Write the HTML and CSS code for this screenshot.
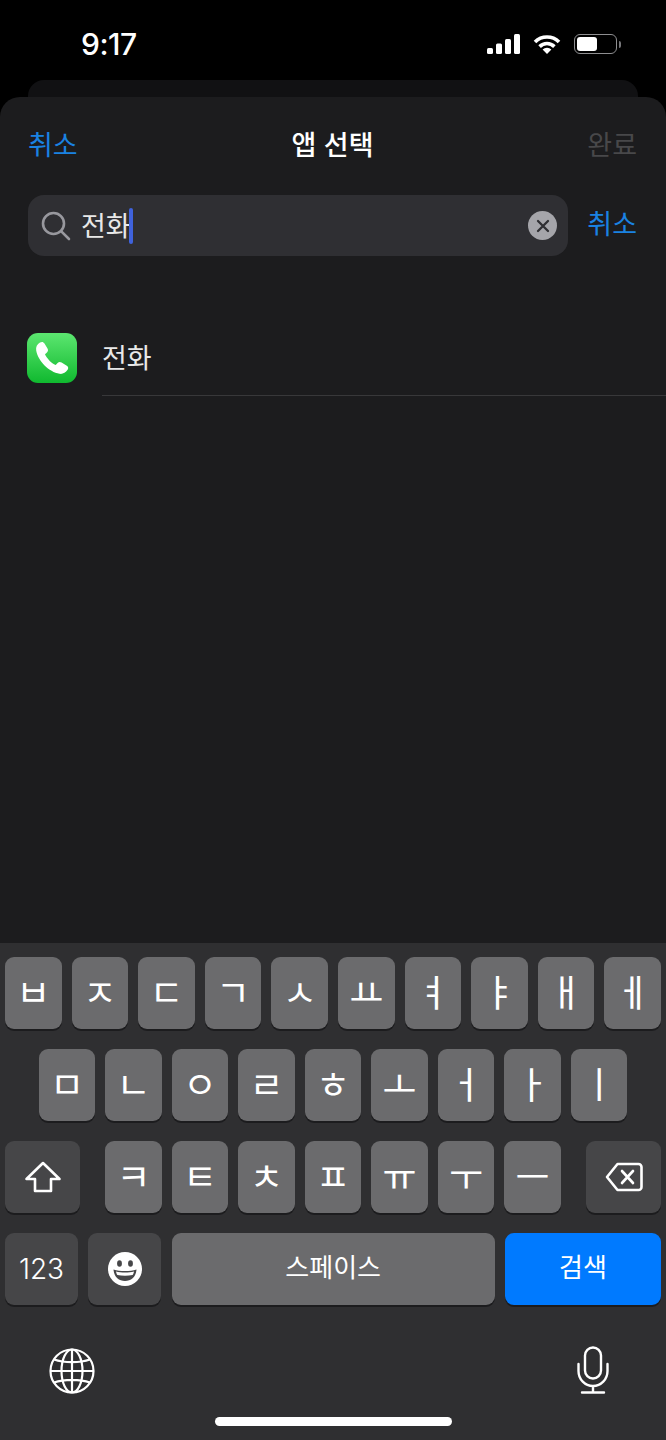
FILE: index.html
```html
<!DOCTYPE html>
<html lang="ko">
<head>
<meta charset="UTF-8">
<meta name="viewport" content="width=device-width, initial-scale=1.0">
<title>앱 선택</title>
<link rel="stylesheet" href="styles.css">
</head>
<body>

<div class="status-bar">
    <span class="clock">9:17</span>
    <div class="status-icons">
        <svg class="signal" width="33" height="20" viewBox="0 0 33 20" fill="#fff">
            <rect x="0" y="14" width="6" height="6" rx="1.5"/>
            <rect x="9" y="9.5" width="6" height="10.5" rx="1.5"/>
            <rect x="18" y="5" width="6" height="15" rx="1.5"/>
            <rect x="27" y="0" width="6" height="20" rx="1.5"/>
        </svg>
        <svg class="wifi" width="28" height="20" viewBox="0 0 28 20">
            <path d="M2 8A17 17 0 0 1 26 8" fill="none" stroke="#fff" stroke-width="3.6"/>
            <path d="M6.6 12.6A10.5 10.5 0 0 1 21.4 12.6" fill="none" stroke="#fff" stroke-width="3.6"/>
            <path d="M14 20L9.6 15.5A6.2 6.2 0 0 1 18.4 15.5Z" fill="#fff"/>
        </svg>
        <div class="battery">
            <div class="battery-level"></div>
        </div>
        <div class="battery-nub"></div>
    </div>
</div>

<div class="back-sheet"></div>

<div class="sheet">
    <div class="nav">
        <span class="link">취소</span>
        <span class="nav-title">앱 선택</span>
        <span class="done">완료</span>
    </div>

    <div class="search-row">
        <div class="search-box">
            <svg class="search-icon" width="30" height="30" viewBox="0 0 30 30" fill="none" stroke="#98989e" stroke-width="2.6" stroke-linecap="round">
                <circle cx="12.5" cy="12.5" r="10.5"/>
                <path d="M20.3 20.3L28 28"/>
            </svg>
            <span class="search-text">전화</span>
            <span class="caret"></span>
            <span class="clear-btn">
                <svg width="14" height="14" viewBox="0 0 14 14" stroke="#2f2f33" stroke-width="2.3" stroke-linecap="round">
                    <path d="M2 2L12 12M12 2L2 12"/>
                </svg>
            </span>
        </div>
        <span class="link search-cancel">취소</span>
    </div>

    <div class="app-row">
        <div class="app-icon">
            <svg width="50" height="50" viewBox="0 0 50 50" fill="#fff">
                <path d="M13 9.5C15 8.5 16.5 9 17.5 10.5L20.5 15.5C21.5 17.2 21 18.5 19.7 19.7L18 21.3C19.5 25 24.5 30.5 28.7 32L30.6 30C31.8 28.8 33 28.5 34.6 29.5L39.8 32.8C41.3 33.8 41.6 35.3 40.6 36.8C38.5 40 35.5 41.3 32.5 40.8C22 39 11 28 9.2 17.5C8.7 14 10 11.3 13 9.5Z"/>
            </svg>
        </div>
        <div class="app-name">전화</div>
    </div>
</div>

<div class="keyboard">
    <div class="key-row spread">
        <div class="key">ㅂ</div>
        <div class="key">ㅈ</div>
        <div class="key">ㄷ</div>
        <div class="key">ㄱ</div>
        <div class="key">ㅅ</div>
        <div class="key">ㅛ</div>
        <div class="key">ㅕ</div>
        <div class="key">ㅑ</div>
        <div class="key">ㅐ</div>
        <div class="key">ㅔ</div>
    </div>
    <div class="key-row">
        <div class="key">ㅁ</div>
        <div class="key">ㄴ</div>
        <div class="key">ㅇ</div>
        <div class="key">ㄹ</div>
        <div class="key">ㅎ</div>
        <div class="key">ㅗ</div>
        <div class="key">ㅓ</div>
        <div class="key">ㅏ</div>
        <div class="key">ㅣ</div>
    </div>
    <div class="key-row spread">
        <div class="key dark shift">
            <svg width="38" height="32" viewBox="0 0 38 32" fill="none" stroke="#fff" stroke-width="2.6" stroke-linejoin="round">
                <path d="M19 2L35.5 18H27V30H11V18H2.5Z"/>
            </svg>
        </div>
        <div class="letters">
            <div class="key">ㅋ</div>
            <div class="key">ㅌ</div>
            <div class="key">ㅊ</div>
            <div class="key">ㅍ</div>
            <div class="key">ㅠ</div>
            <div class="key">ㅜ</div>
            <div class="key">ㅡ</div>
        </div>
        <div class="key dark shift">
            <svg width="38" height="30" viewBox="0 0 38 30" fill="none" stroke="#fff" stroke-width="2.6" stroke-linejoin="round" stroke-linecap="round">
                <path d="M12.5 2H33.5A3 3 0 0 1 36.5 5V25A3 3 0 0 1 33.5 28H12.5L2 15Z"/>
                <path d="M17 9L28 21M28 9L17 21"/>
            </svg>
        </div>
    </div>
    <div class="key-row spread">
        <div class="key dark num">123</div>
        <div class="key dark num">
            <svg width="34" height="34" viewBox="0 0 34 34">
                <circle cx="17" cy="17" r="17" fill="#fff"/>
                <ellipse cx="11.5" cy="11.5" rx="2.4" ry="3.2" fill="#464648"/>
                <ellipse cx="22.5" cy="11.5" rx="2.4" ry="3.2" fill="#464648"/>
                <path d="M5.5 17.5C12 19.5 22 19.5 28.5 17.5C28 25 23 29 17 29C11 29 6 25 5.5 17.5Z" fill="#464648"/>
                <path d="M8 19.5C13 20.8 21 20.8 26 19.5C25.6 21.5 25.2 22.3 24.6 23C20 24 14 24 9.4 23C8.8 22.3 8.4 21.5 8 19.5Z" fill="#fff"/>
            </svg>
        </div>
        <div class="key space">스페이스</div>
        <div class="key search-key">검색</div>
    </div>

    <div class="kb-bottom">
        <svg class="globe" width="46" height="46" viewBox="0 0 46 46" fill="none" stroke="#fff" stroke-width="2.2">
            <circle cx="23" cy="23" r="21.5"/>
            <ellipse cx="23" cy="23" rx="10.5" ry="21.5"/>
            <path d="M23 1.5V44.5M1.5 23H44.5M5 11.5C15 15 31 15 41 11.5M5 34.5C15 31 31 31 41 34.5"/>
        </svg>
        <svg class="mic" width="32" height="48" viewBox="0 0 32 48" fill="none" stroke="#fff" stroke-width="2.4" stroke-linecap="round">
            <rect x="8" y="1.5" width="16" height="31" rx="8"/>
            <path d="M1.5 18V25C1.5 33.5 8 40 16 40C24 40 30.5 33.5 30.5 25V18M16 40V46.5M5 46.5H27"/>
        </svg>
    </div>
    <div class="home-bar"></div>
</div>

</body>
</html>
```

FILE: styles.css
```css
html, body {
    height: 100%;
}

body {
    display: flex;
    flex-direction: column;
    height: 1440px;
    margin: 0;
    overflow: hidden;
    background-color: #000;
    color: #fff;
    font-family: 'Noto Sans CJK KR', 'Noto Sans', sans-serif;
}

.status-bar {
    display: flex;
    justify-content: space-between;
    align-items: center;
    height: 80px;
    padding: 8px 45px 0 81px;
    box-sizing: border-box;
    flex-shrink: 0;
}

.clock {
    font-family: Inter, sans-serif;
    font-size: 30px;
    font-weight: 500;
    letter-spacing: -0.5px;
}

.status-icons {
    display: flex;
    align-items: center;
}

.wifi {
    margin-left: 13px;
}

.battery {
    width: 43px;
    height: 20px;
    margin-left: 13px;
    padding: 2px;
    box-sizing: border-box;
    border: 1.5px solid #8e8e90;
    border-radius: 6px;
}

.battery-level {
    width: 20px;
    height: 100%;
    background-color: #fff;
    border-radius: 3px;
}

.battery-nub {
    width: 2px;
    height: 7px;
    margin-left: 2px;
    background-color: #77777a;
    border-radius: 0 2px 2px 0;
}

.back-sheet {
    height: 17px;
    margin: 0 28px;
    background-color: #111113;
    border-radius: 16px 16px 0 0;
    flex-shrink: 0;
}

.sheet {
    flex: 1;
    background-color: #1c1c1e;
    border-radius: 20px 20px 0 0;
}

.nav {
    display: flex;
    justify-content: space-between;
    align-items: center;
    height: 94px;
    padding: 0 29px 2px 28px;
    box-sizing: border-box;
}

.link {
    color: #1a82e2;
    font-size: 27px;
    line-height: 1;
}

.nav-title {
    font-size: 27px;
    font-weight: 500;
    line-height: 1;
}

.done {
    color: #48484a;
    font-size: 27px;
    line-height: 1;
}

.search-row {
    display: flex;
    align-items: center;
    justify-content: space-between;
    padding: 4px 29px 0 28px;
}

.search-cancel {
    margin-bottom: 6px;
}

.search-box {
    display: flex;
    align-items: center;
    width: 540px;
    height: 61px;
    padding: 0 11px 0 13px;
    box-sizing: border-box;
    background-color: #2f2f33;
    border-radius: 16px;
}

.search-icon {
    flex-shrink: 0;
}

.search-text {
    margin: 0 0 3px 10px;
    font-size: 27px;
    line-height: 1;
    color: #e8e8e8;
}

.caret {
    width: 4px;
    height: 36px;
    margin-left: -2px;
    background-color: #3f62dc;
    border-radius: 2px;
}

.clear-btn {
    display: flex;
    align-items: center;
    justify-content: center;
    width: 29px;
    height: 29px;
    margin-left: auto;
    background-color: #a5a5aa;
    border-radius: 50%;
}

.app-row {
    display: flex;
    height: 70px;
    margin-top: 70px;
    padding-left: 27px;
}

.app-icon {
    width: 50px;
    height: 50px;
    margin-top: 7px;
    background: linear-gradient(#5ce670, #10b92f);
    border-radius: 11px;
    flex-shrink: 0;
}

.app-name {
    flex: 1;
    display: flex;
    align-items: center;
    margin-left: 25px;
    padding-bottom: 9px;
    font-size: 27px;
    line-height: 1;
    color: #e8e8e8;
    box-sizing: border-box;
    border-bottom: 1px solid #38383a;
}

.keyboard {
    height: 497px;
    padding-top: 14px;
    box-sizing: border-box;
    background-color: #2f2f31;
    flex-shrink: 0;
}

.key-row {
    display: flex;
    justify-content: center;
    gap: 10px;
    margin-bottom: 20px;
}

.key-row.spread {
    justify-content: space-between;
    gap: 0;
    padding: 0 5px;
}

.letters {
    display: flex;
    gap: 10px;
}

.key {
    display: flex;
    align-items: center;
    justify-content: center;
    width: 56.5px;
    height: 72px;
    padding-bottom: 3px;
    box-sizing: border-box;
    background-color: #6b6b6d;
    border-radius: 9px;
    box-shadow: 0 2px 0 #1c1c1e;
    font-size: 37px;
    line-height: 1;
}

.key.dark {
    background-color: #464648;
    padding-bottom: 0;
}

.shift {
    width: 75px;
}

.num {
    width: 73px;
    font-family: Inter, sans-serif;
    font-size: 28px;
    font-weight: 300;
}

.space {
    width: 323px;
    padding-bottom: 6px;
    font-size: 26px;
}

.search-key {
    width: 156px;
    padding-bottom: 6px;
    background-color: #007aff;
    font-size: 26px;
}

.kb-bottom {
    display: flex;
    justify-content: space-between;
    align-items: flex-start;
    margin-top: 41px;
    padding: 0 57px 0 49px;
}

.globe {
    margin-top: 2px;
}

.home-bar {
    width: 237px;
    height: 9px;
    margin: 23px auto 0;
    background-color: #fff;
    border-radius: 5px;
}
```
